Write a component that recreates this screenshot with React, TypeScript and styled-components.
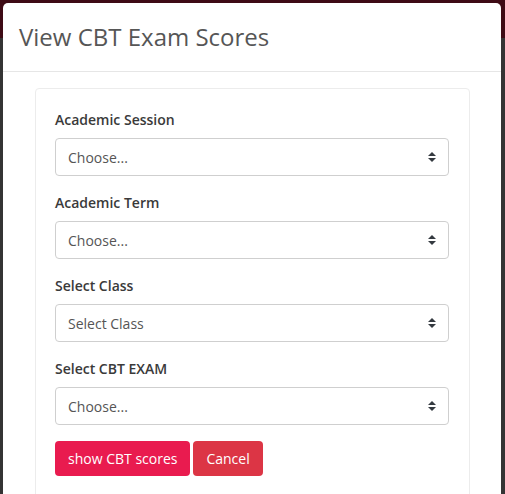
import React from "react";
import styled, { createGlobalStyle } from "styled-components";

const Global = createGlobalStyle`
  html, body { margin: 0; padding: 0; }
  body { font-family: "Open Sans", "Liberation Sans", sans-serif; }
  * { box-sizing: border-box; }
`;

const Page = styled.div`
  position: relative;
  width: 505px;
  height: 494px;
  overflow: hidden;
  background: #343434;
  display: flex;
  flex-direction: column;
`;

const TopBand = styled.div`
  height: 38px;
  background: #3e0b15;
  flex-shrink: 0;
`;

const Modal = styled.div`
  position: absolute;
  left: 3px;
  top: 3px;
  width: 498px;
  height: 600px;
  background: #fff;
  border-radius: 5px;
  display: flex;
  flex-direction: column;
`;

const Header = styled.div`
  padding: 16px 16px;
  border-bottom: 1px solid #e6e6e6;
`;

const Title = styled.h5`
  margin: 0;
  font-size: 24px;
  line-height: 36px;
  font-weight: 400;
  color: #565656;
`;

const Body = styled.div`
  padding: 16px 31px 0 32px;
`;

const Card = styled.div`
  border: 1px solid #ececec;
  border-radius: 4px;
  padding: 20px 20px 20px 19px;
  height: 500px;
`;

const Group = styled.div`
  margin-bottom: 16px;
  display: flex;
  flex-direction: column;
`;

const Label = styled.label`
  font-size: 14px;
  line-height: 21px;
  font-weight: 600;
  color: #3a3a3a;
  margin-bottom: 8px;
`;

const SelectWrap = styled.div`
  position: relative;
  height: 38px;
`;

const Select = styled.select`
  appearance: none;
  -webkit-appearance: none;
  width: 100%;
  height: 38px;
  border: 1px solid #cfcfcf;
  border-radius: 4px;
  background: #fff;
  padding: 0 30px 0 12px;
  font-family: "Open Sans", "Liberation Sans", sans-serif;
  font-size: 14px;
  color: #555;
  outline: none;
`;

const Arrow = styled.svg`
  position: absolute;
  right: 13px;
  top: 14px;
  width: 8px;
  height: 10px;
  pointer-events: none;
`;

const Actions = styled.div`
  display: flex;
  gap: 3px;
`;

const Button = styled.button<{ $tone: "primary" | "danger" }>`
  height: 35px;
  padding: 0 13px;
  border: none;
  border-radius: 4px;
  font-family: "Open Sans", "Liberation Sans", sans-serif;
  font-size: 14px;
  color: #fff;
  background: ${(p) => (p.$tone === "primary" ? "#e91b4f" : "#dc3545")};
`;

const fields = [
  { label: "Academic Session", placeholder: "Choose..." },
  { label: "Academic Term", placeholder: "Choose..." },
  { label: "Select Class", placeholder: "Select Class" },
  { label: "Select CBT EXAM", placeholder: "Choose..." },
];

export default function App() {
  return (
    <>
      <Global />
      <Page>
        <TopBand />
        <Modal>
          <Header>
            <Title>View CBT Exam Scores</Title>
          </Header>
          <Body>
            <Card>
              {fields.map((f) => (
                <Group key={f.label}>
                  <Label>{f.label}</Label>
                  <SelectWrap>
                    <Select defaultValue="">
                      <option value="">{f.placeholder}</option>
                    </Select>
                    <Arrow viewBox="0 0 4 5">
                      <path fill="#343a40" d="M2 0L0 2h4zm0 5L0 3h4z" />
                    </Arrow>
                  </SelectWrap>
                </Group>
              ))}
              <Actions>
                <Button $tone="primary">show CBT scores</Button>
                <Button $tone="danger">Cancel</Button>
              </Actions>
            </Card>
          </Body>
        </Modal>
      </Page>
    </>
  );
}
